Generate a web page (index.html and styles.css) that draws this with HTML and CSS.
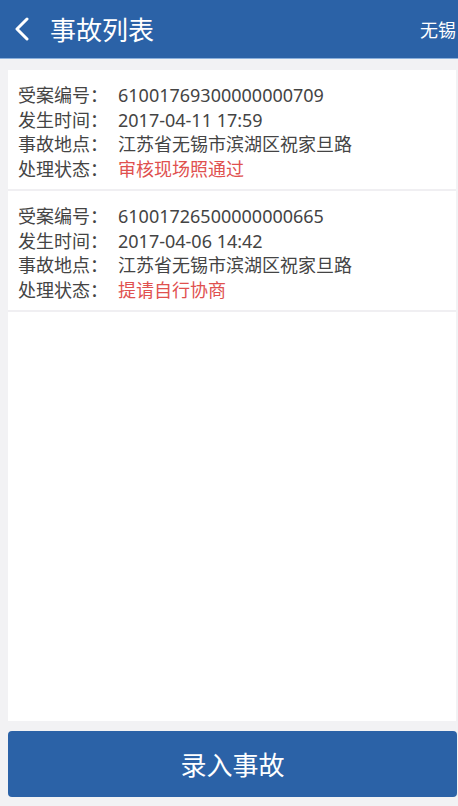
FILE: index.html
```html
<!DOCTYPE html>
<html lang="zh">
<head>
    <meta charset="UTF-8">
    <meta name="viewport" content="width=device-width, initial-scale=1.0">
    <title>事故列表</title>
    <link rel="stylesheet" href="styles.css">
</head>
<body>
    <div class="page">
        <div class="header">
            <span class="back">
                <svg width="16" height="24" viewBox="0 0 16 24"><path d="M13 2 L3 12 L13 22" fill="none" stroke="#fff" stroke-width="3" stroke-linecap="round" stroke-linejoin="round"/></svg>
            </span>
            <span class="title">事故列表</span>
            <span class="city">无锡</span>
        </div>
        <div class="list">
            <div class="item">
                <div class="row"><span class="label">受案编号：</span><span>61001769300000000709</span></div>
                <div class="row"><span class="label">发生时间：</span><span>2017-04-11 17:59</span></div>
                <div class="row"><span class="label">事故地点：</span><span>江苏省无锡市滨湖区祝家旦路</span></div>
                <div class="row"><span class="label">处理状态：</span><span class="status">审核现场照通过</span></div>
            </div>
            <div class="item">
                <div class="row"><span class="label">受案编号：</span><span>61001726500000000665</span></div>
                <div class="row"><span class="label">发生时间：</span><span>2017-04-06 14:42</span></div>
                <div class="row"><span class="label">事故地点：</span><span>江苏省无锡市滨湖区祝家旦路</span></div>
                <div class="row"><span class="label">处理状态：</span><span class="status">提请自行协商</span></div>
            </div>
        </div>
        <div class="footer">
            <div class="btn">录入事故</div>
        </div>
    </div>
</body>
</html>
```

FILE: styles.css
```css
* {
    margin: 0;
    padding: 0;
    box-sizing: border-box;
}

body {
    font-family: "Noto Sans", "Noto Sans CJK SC", sans-serif;
    background: #f2f2f4;
    color: #444;
}

.page {
    width: 458px;
    height: 806px;
    display: flex;
    flex-direction: column;
    overflow: hidden;
}

.header {
    height: 59px;
    background: #2b62a7;
    border-bottom: 1px solid #8bb0dc;
    display: flex;
    align-items: center;
    color: #fff;
    flex-shrink: 0;
}

.back {
    width: 50px;
    padding-left: 14px;
    display: flex;
    align-items: center;
}

.title {
    font-size: 26px;
    flex: 1;
}

.city {
    font-size: 18px;
    width: 38px;
    white-space: nowrap;
    overflow: hidden;
}

.list {
    flex: 1;
    margin: 11px 2px 0 8px;
    background: #fff;
}

.item {
    padding: 13px 0 8px 10px;
    border-bottom: 2px solid #f0eff2;
}

.row {
    display: flex;
    font-size: 18px;
    line-height: 24.5px;
}

.label {
    width: 100px;
    flex-shrink: 0;
}

.status {
    color: #e0514f;
}

.footer {
    padding: 10px 1px 9px 8px;
    flex-shrink: 0;
}

.btn {
    height: 66px;
    background: #2b62a7;
    border-radius: 4px;
    color: #fff;
    font-size: 26px;
    display: flex;
    align-items: center;
    justify-content: center;
}
```
